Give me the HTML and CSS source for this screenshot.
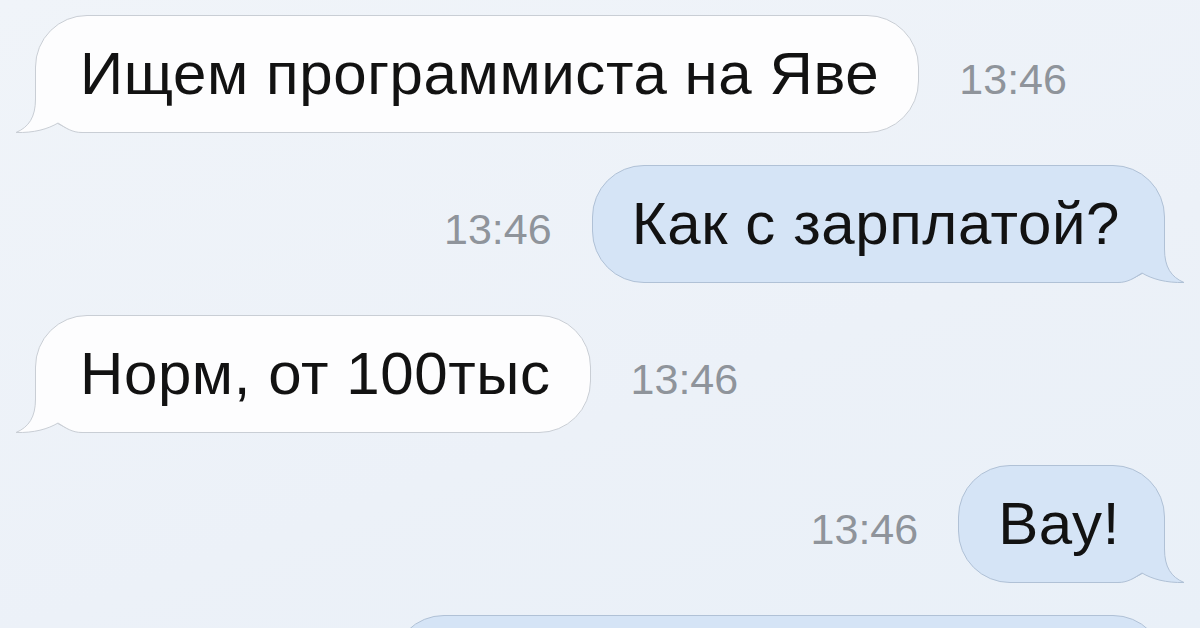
FILE: index.html
```html
<!DOCTYPE html>
<html lang="ru">
<head>
<meta charset="utf-8">
<title>Чат</title>
<link rel="stylesheet" href="styles.css">
</head>
<body>
<div class="chat">
  <div class="row in">
    <div class="bubble"><svg class="tail" viewBox="0 0 80 56"><path class="f" d="M21.5 0 L21.5 22 C21.5 40 15 50 2 55.5 C20 56 34 52 44 46 C52 51 58 55.5 68 55.5 L80 55.5 L80 0 Z"/><path class="s" d="M21.5 0 L21.5 22 C21.5 40 15 50 2 55.5 C20 56 34 52 44 46 C52 51 58 55.5 68 55.5 L80 55.5"/></svg><span class="text">Ищем программиста на Яве</span></div>
    <span class="time">13:46</span>
  </div>
  <div class="row out">
    <span class="time">13:46</span>
    <div class="bubble"><svg class="tail" viewBox="0 0 80 56"><path class="f" d="M21.5 0 L21.5 22 C21.5 40 15 50 2 55.5 C20 56 34 52 44 46 C52 51 58 55.5 68 55.5 L80 55.5 L80 0 Z"/><path class="s" d="M21.5 0 L21.5 22 C21.5 40 15 50 2 55.5 C20 56 34 52 44 46 C52 51 58 55.5 68 55.5 L80 55.5"/></svg><span class="text">Как с зарплатой?</span></div>
  </div>
  <div class="row in">
    <div class="bubble"><svg class="tail" viewBox="0 0 80 56"><path class="f" d="M21.5 0 L21.5 22 C21.5 40 15 50 2 55.5 C20 56 34 52 44 46 C52 51 58 55.5 68 55.5 L80 55.5 L80 0 Z"/><path class="s" d="M21.5 0 L21.5 22 C21.5 40 15 50 2 55.5 C20 56 34 52 44 46 C52 51 58 55.5 68 55.5 L80 55.5"/></svg><span class="text">Норм, от 100тыс</span></div>
    <span class="time">13:46</span>
  </div>
  <div class="row out">
    <span class="time">13:46</span>
    <div class="bubble"><svg class="tail" viewBox="0 0 80 56"><path class="f" d="M21.5 0 L21.5 22 C21.5 40 15 50 2 55.5 C20 56 34 52 44 46 C52 51 58 55.5 68 55.5 L80 55.5 L80 0 Z"/><path class="s" d="M21.5 0 L21.5 22 C21.5 40 15 50 2 55.5 C20 56 34 52 44 46 C52 51 58 55.5 68 55.5 L80 55.5"/></svg><span class="text">Вау!</span></div>
  </div>
  <div class="row out">
    <div class="bubble partial"></div>
  </div>
</div>
</body>
</html>
```
FILE: styles.css
```css
html, body {
  margin: 0;
  height: 628px;
  overflow: hidden;
}
body {
  background: linear-gradient(160deg, #f0f4f9 0%, #ecf1f8 60%, #e9f0f8 100%);
  font-family: "Liberation Sans", Arial, sans-serif;
}
.chat {
  display: flex;
  flex-direction: column;
  gap: 32px;
  padding: 15px 35px 0;
}
.row {
  display: flex;
  align-items: center;
  gap: 40px;
}
.row.out {
  justify-content: flex-end;
}
.bubble {
  position: relative;
  box-sizing: border-box;
  height: 118px;
  border: 1px solid;
  border-radius: 52px;
  font-size: 60px;
  line-height: 70px;
  letter-spacing: 0.6px;
  color: #121212;
  white-space: nowrap;
}
.text {
  position: relative;
}
.in .bubble {
  background: #fdfdfe;
  border-color: #c9ced5;
  padding: 23px 39px 23px 44px;
}
.out .bubble {
  background: #d5e4f6;
  border-color: #b0c1d6;
  padding: 23px 44px 23px 39px;
}
.bubble.partial {
  width: 773px;
}
.time {
  font-size: 43px;
  color: #8f949b;
  padding-top: 10px;
}
.tail {
  position: absolute;
  bottom: -1px;
  width: 80px;
  height: 56px;
  overflow: visible;
}
.in .tail {
  left: -22px;
}
.out .tail {
  right: -22px;
  transform: scaleX(-1);
}
.tail .s {
  fill: none;
  stroke-width: 1;
}
.in .tail .f { fill: #fdfdfe; }
.in .tail .s { stroke: #c9ced5; }
.out .tail .f { fill: #d5e4f6; }
.out .tail .s { stroke: #b0c1d6; }
```
